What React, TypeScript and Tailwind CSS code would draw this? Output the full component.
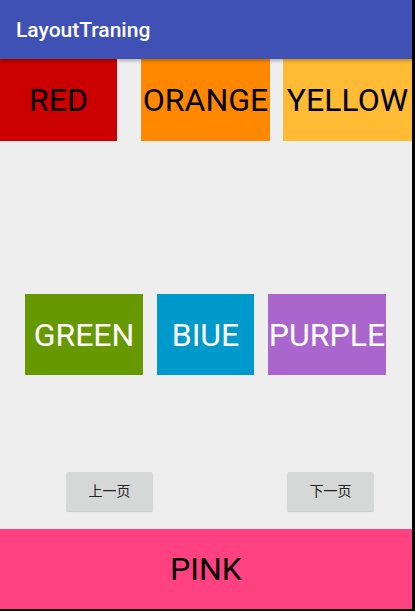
const roboto = { fontFamily: "Roboto, 'Noto Sans CJK SC', sans-serif" };

function Box({ className, label }: { className: string; label: string }) {
  return (
    <div className={`flex items-center justify-center text-[32px] leading-none ${className}`}>
      {label}
    </div>
  );
}

function PageButton({ label }: { label: string }) {
  return (
    <button
      type="button"
      className="flex h-[39px] w-[87px] items-center justify-center rounded-[2px] bg-[#d6d7d7] text-[14px] text-[#222] shadow-[0_1px_1px_rgba(0,0,0,0.15)]"
    >
      {label}
    </button>
  );
}

export default function App() {
  return (
    <div className="h-[611px] w-[415px] bg-black" style={roboto}>
      <div className="flex h-[609px] w-[412px] flex-col overflow-hidden bg-[#eeeeee]">
        <header className="relative z-10 flex h-[59px] shrink-0 items-center bg-[#3f51b5] px-[16px] pt-[3px] shadow-[0_2px_3px_rgba(0,0,0,0.25)]">
          <span className="text-[21px] font-medium text-white">LayoutTraning</span>
        </header>

        <div className="flex h-[82px] shrink-0 text-black">
          <Box className="w-[117px] bg-[#cc0000]" label="RED" />
          <Box className="ml-[24px] w-[129px] bg-[#ff8800]" label="ORANGE" />
          <Box className="ml-[13px] w-[129px] bg-[#ffbb33]" label="YELLOW" />
        </div>

        <div className="mt-[153px] flex h-[81px] shrink-0 pl-[25px] text-white">
          <Box className="w-[118px] bg-[#669900]" label="GREEN" />
          <Box className="ml-[14px] w-[97px] bg-[#0099cc]" label="BIUE" />
          <Box className="ml-[14px] w-[118px] bg-[#aa66cc]" label="PURPLE" />
        </div>

        <div className="mt-[97px] flex justify-between pl-[66px] pr-[38px]">
          <PageButton label="上一页" />
          <PageButton label="下一页" />
        </div>

        <div className="mt-auto flex h-[80px] items-center justify-center bg-[#ff4081] text-[32px] text-black">
          PINK
        </div>
      </div>
    </div>
  );
}
